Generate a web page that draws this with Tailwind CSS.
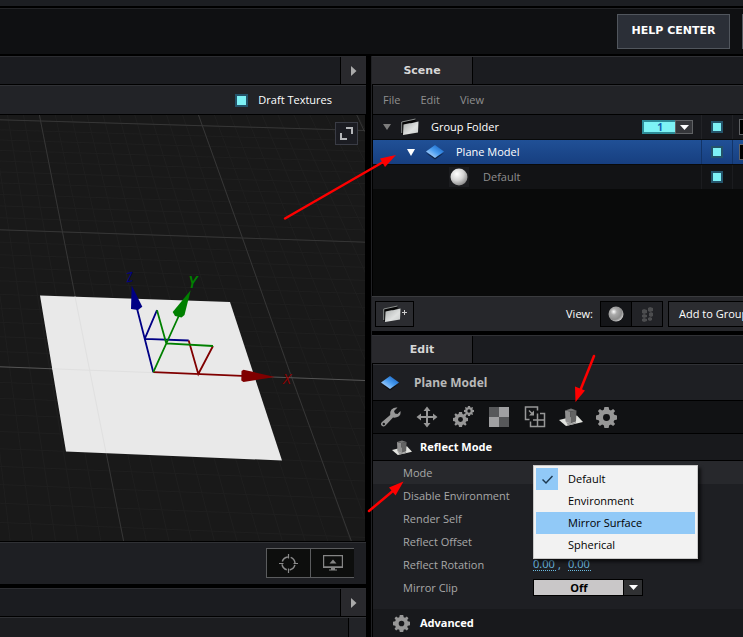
<!DOCTYPE html>
<html lang="en">
<head>
<meta charset="utf-8">
<title>Scene Editor</title>
<script src="https://cdn.jsdelivr.net/npm/@tailwindcss/browser@4"></script>
</head>
<body class="relative flex min-h-screen flex-col overflow-hidden bg-black font-['Open_Sans','Noto_Sans',sans-serif] text-[11px] leading-4 text-white">

<!-- shared symbols -->
<svg class="absolute size-0" aria-hidden="true">
  <defs>
    <linearGradient id="blue" x1="0" y1="1" x2="1" y2="0"><stop offset="0" stop-color="#d8eaff"/><stop offset=".5" stop-color="#4a9df0"/><stop offset="1" stop-color="#0a55b8"/></linearGradient>
    <radialGradient id="ball" cx=".38" cy=".32" r=".7"><stop offset="0" stop-color="#fff"/><stop offset=".55" stop-color="#d4d4d4"/><stop offset="1" stop-color="#8a8a8a"/></radialGradient>
    <radialGradient id="glass" cx=".35" cy=".35" r=".7"><stop offset="0" stop-color="#fff"/><stop offset=".3" stop-color="#aaa"/><stop offset=".75" stop-color="#8c8c8c"/><stop offset="1" stop-color="#ccc"/></radialGradient>
    <linearGradient id="paper" x1="0" y1="0" x2="1" y2="1"><stop offset="0" stop-color="#a9adac"/><stop offset=".6" stop-color="#dfe1e0"/><stop offset="1" stop-color="#c9cccb"/></linearGradient>
    <symbol id="plane" viewBox="0 0 20 16"><path d="M1 9 10 15.500 19 9 10 13Z" fill="#000" opacity=".5"/><path d="M1 7.500 10 1 19 7.500 10 14Z" fill="url(#blue)"/></symbol>
    <symbol id="folder" viewBox="0 0 20 18"><path d="M1.500 4 15.500.7V4L4.500 7 3 16.500 1.500 15Z" fill="#050505"/><path d="M1.700 15V4L15.500 1" fill="none" stroke="#8b8f8e" stroke-width="1"/><path d="M3.500 6.500 9.500 5.200 11 5.200 18.500 3.500 18 14.500 3 17Z" fill="url(#paper)"/></symbol>
    <symbol id="cog" viewBox="-10 -10 20 20"><path fill-rule="evenodd" d="M-2-10H2L2.600-7.400 4.200-6.700 6.300-8.200 8.200-6.300 6.700-4.200 7.400-2.600 10-2V2L7.400 2.600 6.700 4.200 8.200 6.300 6.300 8.200 4.200 6.700 2.600 7.400 2 10H-2L-2.600 7.400-4.200 6.700-6.300 8.200-8.200 6.300-6.700 4.200-7.400 2.600-10 2V-2L-7.400-2.600-6.700-4.200-8.200-6.300-6.300-8.200-4.200-6.700-2.600-7.400ZM0-3.300A3.300 3.300 0 1 0 0 3.300 3.300 3.300 0 1 0 0-3.300Z"/></symbol>
    <symbol id="reflect" viewBox="0 0 24 18"><path d="M0 12 18 7.500 24 14 7 18Z" fill="#e2e3df"/><path d="M7 14 12 15.500 17 14 17 15.500 9 17.500Z" fill="#999"/><path d="M6 2.500 11.500 3.500V15.500L6.500 13.500Z" fill="#8f8f8f"/><path d="M11.500 3.500 17.500 2.500 17 13.500 11.500 15.500Z" fill="#636363"/><path d="M6 2.500 12 .5 17.500 2.500 11.500 3.500Z" fill="#747474"/></symbol>
  </defs>
</svg>

<div class="h-[6px] bg-[#1c1e22]"></div>
<header class="mt-[2px] flex h-[46px] items-center justify-end gap-3 border-t border-[#232427] bg-[#0f1012] pb-px">
  <button class="h-[35px] w-[113px] border border-[#51565d] bg-[#2b2f37] font-['DejaVu_Sans',sans-serif] text-[11px] font-bold">HELP CENTER</button>
  <div class="h-[35px] w-px bg-[#51565d]"></div>
</header>

<div class="mt-[2px] grid flex-1 grid-cols-[minmax(0,1fr)_372px]">

  <!-- viewport column -->
  <main class="mr-[5px] flex flex-col">
    <div class="flex h-[28px] justify-end border-t border-[#2c2d31] bg-[#1b1c20]">
      <button aria-label="Expand" class="flex w-[26px] items-center justify-center border-l border-black bg-[#29292d]"><svg class="h-[10px] w-[6px]" viewBox="0 0 6 10" fill="#aaa"><path d="M0 0 5.500 5 0 10Z"/></svg></button>
    </div>
    <div class="mt-px flex h-[29px] items-center justify-end gap-[10px] border-t border-[#303135] bg-[#222327] pr-[34px]">
      <input id="draft" type="checkbox" checked class="size-[13px] appearance-none border-2 border-[#24536a] bg-[#7df1f5]">
      <label for="draft">Draft Textures</label>
    </div>
    <div class="relative mt-px min-h-[426px] flex-1 border-r border-black bg-[#191919]">
      <svg class="absolute inset-0 size-full" viewBox="0 115 365 427" preserveAspectRatio="xMidYMid slice" fill="none">
        <g id="minor" stroke="#1f1f1f"></g>
        <g stroke="#363636">
          <path d="M0 120.300 365 131M0 230.300 365 242.700M39.300 115 75 296 123.700 542M198.300 115 242.300 238 291.700 378 351.500 542M356.500 115 364.500 132"/>
          <path d="M0 367.300 365 381" stroke="#555"/>
        </g>
        <path d="M40 296 230 302.500 282 461 66 452Z" fill="#e9e9e9"/>
        <path d="M52 369.300 256 377M75 297 106 453" stroke="#e0e0e0"/>
        <g stroke-width="1.800">
          <path d="M153.300 372.700 137 309M144.700 339.300 157 310.700M144.700 339.300 188.700 341" stroke="#000085"/>
          <path d="M153.300 372.700 242 376.300M188.700 341 198.300 374.500 213 346.500" stroke="#800000"/>
          <path d="M153.300 372.700 179 316M157 310.700 166.300 344 213 346.500" stroke="#008000"/>
        </g>
        <path d="M131.700 286 142.300 307.300 138 310.500 131 309.500Z" fill="#000085"/>
        <path d="M190.700 290.700 184.500 315.500 181.500 318 175 316.500 172.700 312.500Z" fill="#008000"/>
        <path d="M241.500 371.500 243.500 370.300 275 377.400 243.500 382.500 241.300 381Z" fill="#800000"/>
        <g font-family="Open Sans, sans-serif" font-style="italic">
          <text x="188" y="288" font-size="17" font-weight="600" fill="#008000">Y</text>
          <text x="283" y="384" font-size="15" fill="#900000">X</text>
          <text x="127" y="283" font-size="13" fill="#000085" transform="rotate(-12 127 283)">Z</text>
        </g>
      </svg>
      <button aria-label="Maximize viewport" class="absolute top-[7px] right-[7px] flex size-[23px] items-center justify-center border border-[#3a3c45] bg-[#1b1c22]"><svg class="size-[13px]" viewBox="0 0 13 13" fill="none" stroke="#b5b7ba" stroke-width="2"><path d="M6 1H12V7M7 12H1V6"/></svg></button>
    </div>
    <div class="mt-px flex h-[42px] items-center justify-end border-t border-[#303135] bg-[#1e1f23] pr-[12px] pb-px">
      <button aria-label="Center view" class="flex h-[30px] w-[44px] items-center justify-center border border-r-0 border-[#5b5c5e] bg-[#0d0e0d]"><svg class="size-[19px]" viewBox="-9.500 -9.500 19 19" fill="none" stroke="#8a8a8a"><circle r="6.500" stroke-width="1.500" stroke-dasharray="7.210 3" stroke-dashoffset="-1.500"/><path d="M-9.500 0H-5M5 0H9.500M0-9.500V-5M0 5V9.500" stroke-width="1.200"/></svg></button>
      <button aria-label="Display" class="flex h-[30px] w-[44px] items-center justify-center border border-r-0 border-[#5b5c5e] bg-[#0d0e0d]"><svg class="h-[16px] w-[20px]" viewBox="0 0 20 16" fill="#858585"><path fill-rule="evenodd" d="M0 0H20V13H12V14.500H14V15.500H6V14.500H8V13H0ZM1.200 1.200V11.200H18.800V1.200Z"/><path d="M6.500 8.500 10 4.500 13.500 8.500Z"/></svg></button>
    </div>
    <div class="mt-[4px] flex h-[28px] justify-end border-t border-[#2c2d31] bg-[#1b1c20]">
      <button aria-label="Expand timeline" class="flex w-[26px] items-center justify-center border-l border-black bg-[#29292d]"><svg class="h-[10px] w-[6px]" viewBox="0 0 6 10" fill="#aaa"><path d="M0 0 5.500 5 0 10Z"/></svg></button>
    </div>
    <div class="mt-px flex h-[20px] justify-end border-t border-[#303135] bg-[#1c1d20]"><div class="w-[18px] border-l border-black bg-[#222327]"></div></div>
  </main>

  <!-- panels column -->
  <aside class="flex min-w-0 flex-col border-l border-[#202124]">
    <section class="flex flex-1 flex-col">
      <div class="flex h-[28px] border-t border-[#303135] bg-[#1b1c20]">
        <h2 class="flex w-[101px] items-center justify-center border-r border-black bg-[#29292d] font-['DejaVu_Sans',sans-serif] text-[11px] font-bold text-[#d6d6d6]">Scene</h2>
      </div>
      <nav class="mt-px ml-px flex h-[29px] items-center gap-5 border-t border-[#303135] bg-[#222327] pl-[10px] text-[#8f8f8f]">
        <button>File</button><button>Edit</button><button>View</button>
      </nav>
      <div class="mt-px ml-px flex flex-1 flex-col gap-px overflow-hidden bg-[#090a0a]">
        <div class="grid h-[24px] grid-cols-[minmax(0,1fr)_31px_11px] bg-[#18191d]">
          <div class="flex items-center pr-[8px] pl-[10px]">
            <svg class="h-[6px] w-[8px]" viewBox="0 0 8 6" fill="#7c7c7c"><path d="M0 0H8L4 6Z"/></svg>
            <svg class="ml-[9px] h-[18px] w-[20px]"><use href="#folder"/></svg>
            <span class="ml-[11px] flex-1">Group Folder</span>
            <div class="relative h-[14px] w-[51px]">
              <select aria-label="Group" class="block h-[14px] w-full appearance-none border-2 border-[#2d8c98] bg-[#7df3f5] pr-[15px] text-center text-[10px] leading-[10px] font-bold text-[#1460b0] [text-align-last:center]"><option>1</option></select>
              <div class="pointer-events-none absolute inset-y-0 right-0 flex w-[18px] items-center justify-center border border-[#606265] bg-[#35363a]"><svg class="h-[5px] w-[9px]" viewBox="0 0 9 5" fill="#fff"><path d="M0 0H9L4.500 5Z"/></svg></div>
            </div>
          </div>
          <div class="flex items-center justify-center border-l border-[#222327]"><input type="checkbox" checked aria-label="Group Folder visible" class="size-[12px] appearance-none border-2 border-[#24536a] bg-[#7df1f5]"></div>
          <div class="flex items-center border-l border-[#222327] pl-[6px]"><input type="checkbox" aria-label="Group Folder option" class="size-[16px] shrink-0 appearance-none border border-[#606265] bg-black"></div>
        </div>
        <div class="grid h-[24px] grid-cols-[minmax(0,1fr)_31px_11px] bg-linear-to-b from-[#205096] to-[#173f80]">
          <div class="flex items-center pl-[34px]">
            <svg class="h-[7px] w-[8px]" viewBox="0 0 8 7" fill="#fff"><path d="M0 0H8L4 7Z"/></svg>
            <svg class="ml-[10px] h-[16px] w-[20px]"><use href="#plane"/></svg>
            <span class="ml-[11px]">Plane Model</span>
          </div>
          <div class="flex items-center justify-center border-l border-[#123468]"><input type="checkbox" checked aria-label="Plane Model visible" class="size-[12px] appearance-none border-2 border-[#24536a] bg-[#7df1f5]"></div>
          <div class="flex items-center border-l border-[#123468] pl-[6px]"><input type="checkbox" aria-label="Plane Model option" class="size-[16px] shrink-0 appearance-none border border-[#606265] bg-black"></div>
        </div>
        <div class="grid h-[24px] grid-cols-[minmax(0,1fr)_31px_11px] bg-[#121315]">
          <div class="flex items-center pl-[76px]">
            <div class="bg-[#1b1c1f] p-px"><svg class="size-[18px]" viewBox="0 0 18 18"><circle cx="9" cy="9" r="8.500" fill="url(#ball)"/></svg></div>
            <span class="ml-[14px] text-[#8f8f8f]">Default</span>
          </div>
          <div class="flex items-center justify-center border-l border-[#1b1c1f]"><input type="checkbox" checked aria-label="Default visible" class="size-[12px] appearance-none border-2 border-[#24536a] bg-[#7df1f5]"></div>
          <div class="border-l border-[#1b1c1f]"></div>
        </div>
      </div>
      <div class="flex h-[35px] items-center border-t border-[#3a3b3e] bg-[#26272b] pl-[3px]">
        <button aria-label="New folder" class="flex h-[26px] w-[39px] items-center justify-center border border-black bg-[#2b2c30]"><svg class="h-[18px] w-[20px]"><use href="#folder"/></svg><svg class="mb-1 size-[5px]" viewBox="0 0 5 5" stroke="#ccc"><path d="M2.500 0V5M0 2.500H5"/></svg></button>
        <span class="ml-auto">View:</span>
        <div class="ml-[7px] flex h-[26px] w-[63px] shrink-0 border border-black">
          <button aria-label="Shaded view" class="flex flex-1 items-center justify-center bg-[#141518]"><svg class="size-[16px]" viewBox="0 0 16 16"><circle cx="8" cy="8" r="7.500" fill="url(#glass)"/></svg></button>
          <button aria-label="Block view" class="flex flex-1 items-center justify-center border-l border-black bg-[#222327]"><svg class="h-[15px] w-[13px]" viewBox="0 0 13 15" fill="#4c4d4f"><path d="M7 1 9 0 12 1V4L9 5 7 4ZM1 3 3 2 6 3V6L3 7 1 6ZM8 6 10 5 12 6V9L10 10 8 9ZM1 8 3 7 6 8V10L3 11 1 10ZM1 12 3 11 6 12V14L3 15 1 14ZM7 11 9 10 11 11V13L9 14 7 13Z"/></svg></button>
        </div>
        <button class="ml-[5px] h-[26px] w-[75px] shrink-0 border border-r-0 border-black bg-[#2b2c30] pl-[10px] text-left whitespace-nowrap">Add to Group</button>
      </div>
    </section>

    <section class="mt-[4px]">
      <div class="flex h-[28px] border-t border-[#303135] bg-[#1b1c20]">
        <h2 class="flex w-[101px] items-center justify-center border-r border-black bg-[#29292d] font-['DejaVu_Sans',sans-serif] text-[11px] font-bold text-[#d6d6d6]">Edit</h2>
      </div>
      <div class="mt-px ml-px flex h-[36px] items-center border-t border-[#303135] bg-[#1e1f23] pl-[7px]">
        <svg class="h-[16px] w-[20px]"><use href="#plane"/></svg>
        <h3 class="ml-[14px] font-['Noto_Sans',sans-serif] text-[12px] font-bold text-[#b8b8b8]">Plane Model</h3>
      </div>
      <div class="mt-px ml-px flex h-[32px] items-center gap-[14px] bg-[#111214] pl-[7px] text-[#979797]">
        <button aria-label="Tools"><svg class="size-[22px]" viewBox="0 0 22 22"><path fill="currentColor" fill-rule="evenodd" d="M17.500 1.500 14 5 15 7.500 17.500 8 20.500 5Q21 9 18.500 10.500 16 12 13 11.500L5.500 19.500Q3.500 21.500 1.800 19.800 0 18 2 16L10.200 9Q9.500 6 11.500 3.500 14 1 17.500 1.500ZM3.800 16.800A1.200 1.200 0 1 0 3.800 19.200 1.200 1.200 0 1 0 3.800 16.800Z"/></svg></button>
        <button aria-label="Move"><svg class="size-[22px]" viewBox="0 0 22 22" fill="currentColor"><path d="M11 .5 14.500 5H12V10H17V7.500L21.500 11 17 14.500V12H12V17H14.500L11 21.500 7.500 17H10V12H5V14.500L.5 11 5 7.500V10H10V5H7.500Z"/></svg></button>
        <button aria-label="Particles"><svg class="size-[22px] fill-current" viewBox="0 0 22 22"><use href="#cog" x="1" y="6" width="15" height="15"/><use href="#cog" x="12" y="0" width="10" height="10"/></svg></button>
        <button aria-label="Texture"><svg class="size-[22px]" viewBox="0 0 22 22"><path d="M1 1H21V21H1Z" fill="#57585a"/><path d="M11 1H21V11H11ZM1 11H11V21H1Z" fill="#a0a0a2"/></svg></button>
        <button aria-label="UV mapping"><svg class="size-[22px]" viewBox="0 0 22 22" fill="none" stroke="currentColor" stroke-width="1.500"><path d="M5.500 13.500H1.500V1H13.500V4.500M6.500 15.500V20.500H20.500V7.500H16M13.500 7.500V20.500M9 14H20.500"/><path d="M5 4.500 8.500 8"/><path d="M10 4.500V9.500H5Z" fill="currentColor" stroke="none"/></svg></button>
        <button aria-label="Reflection"><svg class="-mx-px h-[18px] w-[24px]"><use href="#reflect"/></svg></button>
        <button aria-label="Settings"><svg class="size-[21px] fill-current"><use href="#cog"/></svg></button>
      </div>
      <div class="mt-px ml-px flex h-[27px] items-center border-b border-black bg-[#18191c] pl-[19px]">
        <svg class="h-[15px] w-[20px]"><use href="#reflect"/></svg>
        <h4 class="ml-[8px] font-['Noto_Sans',sans-serif] text-[11px] font-bold">Reflect Mode</h4>
      </div>
      <div class="ml-px bg-[#1e1f23] pb-[10px] text-[#a8a8a8]">
        <div class="relative flex h-[23px] items-center bg-[#27282c] pl-[30px]">
          <span id="mode">Mode</span>
          <ul role="listbox" aria-labelledby="mode" class="absolute top-[4px] left-[160px] z-10 w-[165px] border border-[#c8c8c8] bg-[#f2f2f2] p-[2px] text-black shadow-[3px_3px_3px_rgba(0,0,0,0.6)]">
            <li role="option" aria-selected="true" class="flex h-[22px] items-center"><span class="flex size-[22px] items-center justify-center bg-[#91c9f7]"><svg class="size-[11px]" viewBox="0 0 11 9" fill="none" stroke="#1d3a52" stroke-width="1.500"><path d="M.5 4.500 4 8 10.500 1"/></svg></span><span class="ml-[10px]">Default</span></li>
            <li role="option" class="flex h-[22px] items-center pl-[32px]">Environment</li>
            <li role="option" class="flex h-[22px] items-center bg-[#91c9f7] pl-[32px]">Mirror Surface</li>
            <li role="option" class="flex h-[22px] items-center pl-[32px]">Spherical</li>
          </ul>
        </div>
        <div class="flex h-[23px] items-center pl-[30px]">Disable Environment</div>
        <div class="flex h-[23px] items-center pl-[30px]">Render Self</div>
        <div class="flex h-[23px] items-center pl-[30px]">Reflect Offset</div>
        <div class="flex h-[23px] items-center pl-[30px]">
          <span class="w-[130px]">Reflect Rotation</span>
          <input aria-label="Reflect Rotation X" value="0.00" class="h-[13px] w-[23px] border-b border-dotted border-[#6cbbe0] bg-transparent text-[#6cbbe0]"><span class="w-[12px] pl-[2px] text-[#6cbbe0]">,</span><input aria-label="Reflect Rotation Y" value="0.00" class="h-[13px] w-[23px] border-b border-dotted border-[#6cbbe0] bg-transparent text-[#6cbbe0]">
        </div>
        <div class="flex h-[23px] items-center pl-[30px]">
          <label for="clip" class="w-[130px]">Mirror Clip</label>
          <div class="relative h-[17px] w-[110px]">
            <select id="clip" class="block h-[17px] w-full appearance-none border border-black bg-[#c9c7c8] pr-[18px] text-center text-[11px] leading-[15px] font-bold text-black [text-align-last:center]"><option>Off</option></select>
            <div class="pointer-events-none absolute inset-y-0 right-0 flex w-[20px] items-center justify-center border border-black bg-[#303133]"><svg class="h-[5px] w-[9px]" viewBox="0 0 9 5" fill="#fff"><path d="M0 0H9L4.500 5Z"/></svg></div>
          </div>
        </div>
      </div>
      <div class="ml-px flex h-[28px] items-center bg-[#18191c] pl-[20px]">
        <svg class="size-[17px] fill-[#979797]"><use href="#cog"/></svg>
        <h4 class="ml-[10px] font-['Noto_Sans',sans-serif] text-[11px] font-bold">Advanced</h4>
      </div>
    </section>
  </aside>
</div>

<!-- pointer arrows -->
<svg class="pointer-events-none absolute top-0 left-0 z-20 h-[637px] w-[743px]" viewBox="0 0 743 637" fill="#f00" stroke="#f00" stroke-linecap="round">
  <path d="M285 218.500 384 161.500" stroke-width="2.500"/><path d="M396 155 380 158.500 385 167Z" stroke="none"/>
  <path d="M594 356 580 391" stroke-width="2.500"/><path d="M575.500 402 575 386.500 585 390.500Z" stroke="none"/>
  <path d="M369 511 394 490" stroke-width="2.500"/><path d="M403.500 481.500 389 487.500 395.500 495.500Z" stroke="none"/>
</svg>

<script>
  // faint perspective floor grid: ten subdivisions between the strong lines
  let d = "";
  for (let k = -12; k <= 21; k++) d += `M${39.3 + 15.9 * k} 115L${123.7 + 22.7 * k} 542`;
  for (let k = 0; k <= 32; k++) {
    const t = k / 10, y = 10210 / (10.147 - t) - 885.9;
    d += `M0 ${y}L365 ${y + 10.9 + 1.4 * t}`;
  }
  document.getElementById("minor").innerHTML = `<path d="${d}"/>`;
</script>
</body>
</html>
